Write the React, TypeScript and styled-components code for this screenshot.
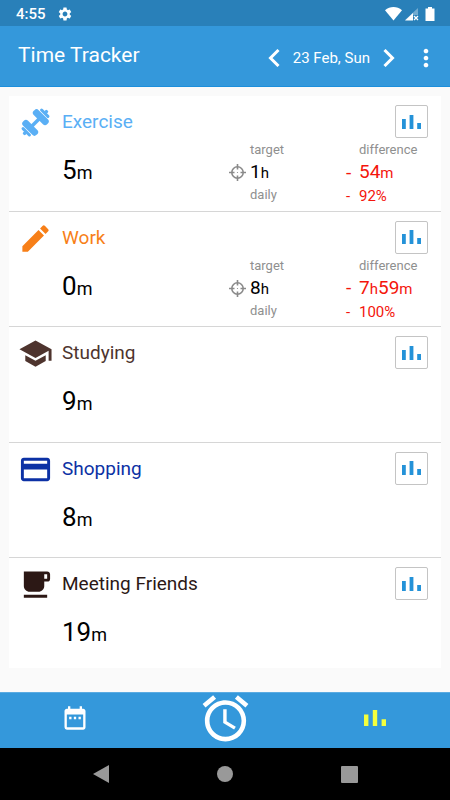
import React from "react";
import styled, { createGlobalStyle } from "styled-components";
import {
  MdAlarm,
  MdDateRange,
  MdEdit,
  MdLocalCafe,
  MdMoreVert,
  MdPayment,
  MdSchool,
  MdSettings,
} from "react-icons/md";

const GlobalStyle = createGlobalStyle`
  *, *::before, *::after { box-sizing: border-box; }
  body {
    margin: 0;
    background: #fafafa;
    font-family: Roboto, "Liberation Sans", sans-serif;
    font-weight: 400;
    color: #000;
  }
  button { font: inherit; color: inherit; }
  h1, h2, p, ul { margin: 0; padding: 0; font-weight: inherit; }
  svg { display: block; flex: none; }
`;

const Page = styled.div`
  display: flex;
  flex-direction: column;
  min-height: 100vh;
`;

const StatusBar = styled.div`
  display: flex;
  align-items: center;
  justify-content: space-between;
  height: 26px;
  padding: 2px 13px 0 16px;
  background: #2980b9;
  color: #fff;
`;

const StatusGroup = styled.div`
  display: flex;
  align-items: center;
  gap: 3px;
`;

const Clock = styled.span`
  margin-right: 8px;
  font-size: 15px;
  line-height: 24px;
  font-weight: 500;
`;

const AppBar = styled.header`
  display: flex;
  align-items: center;
  height: 61px;
  padding: 3px 8px 0 18px;
  background: #3498db;
  border-bottom: 1px solid #1c8fdc;
  color: #fff;
`;

const Title = styled.h1`
  flex: 1;
  padding-bottom: 6px;
  font-size: 21px;
  line-height: 28px;
`;

const DateSwitcher = styled.div`
  display: flex;
  align-items: center;
  margin-right: 5px;
`;

const DateLabel = styled.span`
  margin: 0 3px;
  font-size: 15px;
  line-height: 24px;
`;

const IconButton = styled.button<{ $width: number }>`
  display: flex;
  align-items: center;
  justify-content: center;
  width: ${(p) => p.$width}px;
  height: 40px;
  padding: 0;
  border: 0;
  background: none;
  cursor: pointer;
`;

const Main = styled.main`
  flex: 1;
  display: flex;
  flex-direction: column;
  padding: 9px 9px 24px;
`;

const TaskList = styled.ul`
  flex: 1;
  display: flex;
  flex-direction: column;
  background: #fff;
  list-style: none;
`;

const TaskRow = styled.li`
  flex: 1 0 110px;
  display: grid;
  grid-template-columns: 53px 1fr auto;
  align-content: start;
  padding: 9px 13px 0 0;
  border-bottom: 1px solid #d6d6d6;

  &:last-child {
    flex: 0 0 110px;
    border-bottom: 0;
  }
`;

const TaskIcon = styled.span<{ $color: string }>`
  display: flex;
  align-items: center;
  padding-left: 9px;
  color: ${(p) => p.$color};
`;

const TaskName = styled.h2<{ $color: string }>`
  font-size: 19px;
  line-height: 33px;
  color: ${(p) => p.$color};
`;

const ChartButton = styled.button`
  display: flex;
  align-items: center;
  justify-content: center;
  width: 33px;
  height: 33px;
  padding: 0;
  border: 1px solid #c4c4c4;
  border-radius: 2px;
  background: #fff;
  color: #2492d8;
  cursor: pointer;
`;

const Details = styled.div`
  grid-column: 2 / -1;
  display: grid;
  grid-template-columns: 1fr 109px 69px;
  align-items: start;
`;

const Spent = styled.p`
  padding-top: 14px;
  font-size: 26px;
  line-height: 32px;
`;

const Unit = styled.small<{ $size: number }>`
  font-size: ${(p) => p.$size}px;
`;

const Stat = styled.div<{ $lead: number; $color: string }>`
  display: grid;
  grid-template-columns: ${(p) => p.$lead}px 1fr;
  grid-template-rows: 20px 25px auto;
  align-items: center;
  margin-left: -${(p) => p.$lead}px;
  color: ${(p) => p.$color};
  white-space: nowrap;
`;

const Caption = styled.span`
  grid-column: 2;
  font-size: 13px;
  line-height: 20px;
  color: #8f8f8f;
`;

const Figure = styled.span`
  font-size: 19px;
  line-height: 24px;
`;

const Percent = styled.span`
  font-size: 15px;
  line-height: 22px;
`;

const BottomNav = styled.nav`
  display: grid;
  grid-template-columns: repeat(3, 1fr);
  grid-template-rows: 50px;
  height: 56px;
  background: #3498db;
  border-top: 1px solid #5aabe2;
`;

const NavButton = styled.button<{ $active?: boolean }>`
  display: flex;
  align-items: center;
  justify-content: center;
  padding: 0;
  border: 0;
  background: none;
  color: ${(p) => (p.$active ? "#f4ff3d" : "#fff")};
  cursor: pointer;
`;

const SystemNav = styled.nav`
  display: flex;
  align-items: center;
  justify-content: center;
  gap: 80px;
  height: 52px;
  background: #000;
`;

const BarsIcon = ({ width, height }: { width: number; height: number }) => (
  <svg width={width} height={height} viewBox="0 0 20 14" preserveAspectRatio="none" fill="currentColor" aria-hidden="true">
    <path d="M0 4h4v10H0zM8 0h4v14H8zM16 8h4v6h-4z" />
  </svg>
);

const Chevron = ({ d }: { d: string }) => (
  <svg width="12" height="18" viewBox="0 0 12 18" fill="none" stroke="currentColor" strokeWidth="3" aria-hidden="true">
    <path d={d} />
  </svg>
);

const DumbbellIcon = () => (
  <svg width="35" height="35" viewBox="-17.5 -17.5 35 35" fill="currentColor" aria-hidden="true">
    <g transform="rotate(-45)">
      <rect x="-6" y="-1.8" width="12" height="3.6" />
      <rect x="4" y="-9.5" width="7" height="19" rx="3" />
      <rect x="-11" y="-9.5" width="7" height="19" rx="3" />
      <rect x="11.6" y="-6" width="3" height="12" rx="1.5" />
      <rect x="-14.6" y="-6" width="3" height="12" rx="1.5" />
      <rect x="14" y="-1.7" width="3" height="3.4" rx="1.2" />
      <rect x="-17" y="-1.7" width="3" height="3.4" rx="1.2" />
    </g>
  </svg>
);

const TargetIcon = () => (
  <svg width="17" height="17" viewBox="0 0 17 17" fill="none" stroke="#8a8a8a" strokeWidth="1.6" aria-hidden="true">
    <circle cx="8.5" cy="8.5" r="5.7" />
    <path d="M8.5 0v5.5M8.5 11.5v5.5M0 8.5h5.5M11.5 8.5h5.5" />
    <circle cx="8.5" cy="8.5" r="0.6" fill="#8a8a8a" stroke="none" />
  </svg>
);

type Task = {
  name: string;
  color: string;
  icon: React.ReactNode;
  spent: string;
  target?: string;
  difference?: [string, string][];
  percent?: string;
};

const tasks: Task[] = [
  {
    name: "Exercise",
    color: "#5aaff5",
    icon: <DumbbellIcon />,
    spent: "5",
    target: "1",
    difference: [["54", "m"]],
    percent: "92%",
  },
  {
    name: "Work",
    color: "#f77f18",
    icon: <MdEdit size={35} />,
    spent: "0",
    target: "8",
    difference: [["7", "h"], ["59", "m"]],
    percent: "100%",
  },
  { name: "Studying", color: "#4e342e", icon: <MdSchool size={35} />, spent: "9" },
  { name: "Shopping", color: "#0c31a5", icon: <MdPayment size={35} />, spent: "8" },
  { name: "Meeting Friends", color: "#2c1815", icon: <MdLocalCafe size={35} />, spent: "19" },
];

const TaskItem = ({ task }: { task: Task }) => (
  <TaskRow>
    <TaskIcon $color={task.color}>{task.icon}</TaskIcon>
    <TaskName $color={task.color}>{task.name}</TaskName>
    <ChartButton type="button" aria-label={`${task.name} chart`}>
      <BarsIcon width={19} height={14} />
    </ChartButton>
    <Details>
      <Spent>
        {task.spent}
        <Unit $size={18}>m</Unit>
      </Spent>
      {task.difference && (
        <>
          <Stat $lead={21} $color="#000">
            <Caption>target</Caption>
            <TargetIcon />
            <Figure>
              {task.target}
              <Unit $size={15}>h</Unit>
            </Figure>
            <Caption>daily</Caption>
          </Stat>
          <Stat $lead={13} $color="#f4150c">
            <Caption>difference</Caption>
            <Figure>-</Figure>
            <Figure>
              {task.difference.map(([value, unit]) => (
                <React.Fragment key={unit}>
                  {value}
                  <Unit $size={15}>{unit}</Unit>
                </React.Fragment>
              ))}
            </Figure>
            <Percent>-</Percent>
            <Percent>{task.percent}</Percent>
          </Stat>
        </>
      )}
    </Details>
  </TaskRow>
);

export default function App() {
  return (
    <Page>
      <GlobalStyle />
      <StatusBar>
        <StatusGroup>
          <Clock>4:55</Clock>
          <MdSettings size={16} />
        </StatusGroup>
        <StatusGroup>
          <svg width="17" height="14" viewBox="0 0 17 14" fill="#fff" aria-hidden="true">
            <path d="M0 3.2C5 -1 12 -1 17 3.2L8.5 13.5z" />
          </svg>
          <svg width="14" height="14" viewBox="0 0 14 14" fill="#fff" aria-hidden="true">
            <path d="M13 1v7H8v5H0z" opacity="0.35" />
            <path d="M8 6v7.5H0z" />
            <path d="M9 9l4 4M13 9l-4 4" stroke="#fff" strokeWidth="1.3" />
          </svg>
          <svg width="15" height="14" viewBox="0 0 15 14" fill="#fff" aria-hidden="true">
            <path d="M4 1.5h2V0h4v1.5h2.5V14h-9V1.5z" />
          </svg>
        </StatusGroup>
      </StatusBar>
      <AppBar>
        <Title>Time Tracker</Title>
        <DateSwitcher>
          <IconButton type="button" aria-label="Previous day" $width={32}>
            <Chevron d="M10.5 1L2.5 9l8 8" />
          </IconButton>
          <DateLabel>23 Feb, Sun</DateLabel>
          <IconButton type="button" aria-label="Next day" $width={32}>
            <Chevron d="M1.5 1l8 8-8 8" />
          </IconButton>
        </DateSwitcher>
        <IconButton type="button" aria-label="More options" $width={32}>
          <MdMoreVert size={28} />
        </IconButton>
      </AppBar>
      <Main>
        <TaskList>
          {tasks.map((task) => (
            <TaskItem key={task.name} task={task} />
          ))}
        </TaskList>
      </Main>
      <BottomNav aria-label="Sections">
        <NavButton type="button" aria-label="Calendar">
          <MdDateRange size={28} />
        </NavButton>
        <NavButton type="button" aria-label="Timer">
          <MdAlarm size={55} />
        </NavButton>
        <NavButton type="button" aria-label="Statistics" $active>
          <BarsIcon width={22} height={16} />
        </NavButton>
      </BottomNav>
      <SystemNav aria-label="System">
        <IconButton type="button" aria-label="Back" $width={44}>
          <svg width="16" height="18" viewBox="0 0 16 18" fill="#999" aria-hidden="true">
            <path d="M16 0v18L0 9z" />
          </svg>
        </IconButton>
        <IconButton type="button" aria-label="Home" $width={44}>
          <svg width="16" height="16" viewBox="0 0 16 16" fill="#999" aria-hidden="true">
            <circle cx="8" cy="8" r="8" />
          </svg>
        </IconButton>
        <IconButton type="button" aria-label="Recent apps" $width={44}>
          <svg width="17" height="17" viewBox="0 0 17 17" fill="#999" aria-hidden="true">
            <rect width="17" height="17" rx="1" />
          </svg>
        </IconButton>
      </SystemNav>
    </Page>
  );
}
